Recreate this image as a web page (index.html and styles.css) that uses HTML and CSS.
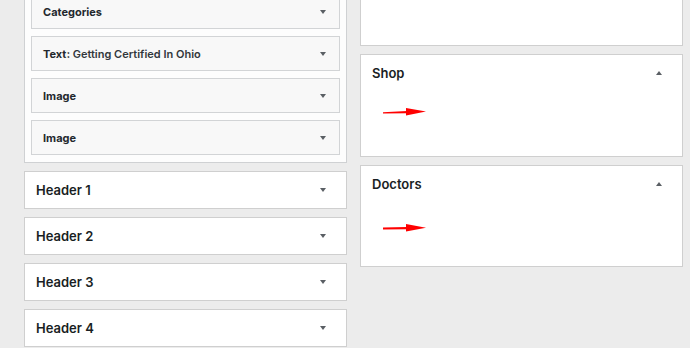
FILE: index.html
```html
<!DOCTYPE html>
<html>
<head>
<meta charset="utf-8">
<link rel="stylesheet" href="styles.css">
</head>
<body>
<div class="page">
  <div class="col">
    <div class="widgets">
      <div class="widget"><span class="w-title">Categories</span><span class="tri down"></span></div>
      <div class="widget"><span class="w-title">Text: <span class="w-sub">Getting Certified In Ohio</span></span><span class="tri down"></span></div>
      <div class="widget"><span class="w-title">Image</span><span class="tri down"></span></div>
      <div class="widget"><span class="w-title">Image</span><span class="tri down"></span></div>
    </div>
    <div class="section"><span class="s-title">Header 1</span><span class="tri down"></span></div>
    <div class="section"><span class="s-title">Header 2</span><span class="tri down"></span></div>
    <div class="section"><span class="s-title">Header 3</span><span class="tri down"></span></div>
    <div class="section"><span class="s-title">Header 4</span><span class="tri down"></span></div>
  </div>
  <div class="col">
    <div class="panel panel-top"></div>
    <div class="panel panel-shop">
      <div class="p-head"><span class="s-title">Shop</span><span class="tri up"></span></div>
      <div class="p-body body-shop">
        <svg class="red-arrow" width="44" height="10" viewBox="0 0 44 10"><polygon points="0,5.2 24,4 24,6.2 0,6.6" fill="#f00"/><polygon points="23,1 43,4.6 23,8.6" fill="#f00"/></svg>
      </div>
    </div>
    <div class="panel panel-doc">
      <div class="p-head"><span class="s-title">Doctors</span><span class="tri up"></span></div>
      <div class="p-body body-doc">
        <svg class="red-arrow" width="44" height="10" viewBox="0 0 44 10"><polygon points="0,4.6 24,4 24,6.2 0,6.4" fill="#f00"/><polygon points="23,1 43,4.8 23,8.6" fill="#f00"/></svg>
      </div>
    </div>
  </div>
</div>
</body>
</html>
```
FILE: styles.css
```css
html, body {
  margin: 0;
  padding: 0;
  background: #ececec;
  font-family: Inter, "Liberation Sans", sans-serif;
  color: #1d2327;
  overflow: hidden;
}
.page {
  display: flex;
  gap: 13px;
  padding-left: 24px;
  height: 348px;
}
.col {
  width: 323px;
  display: flex;
  flex-direction: column;
  flex: none;
}
.widgets {
  margin-top: -13px;
  background: #fdfdfd;
  border: 1px solid #cfd1d3;
  padding: 6px 6px 7px 6px;
  display: flex;
  flex-direction: column;
  gap: 7px;
}
.widget {
  height: 33px;
  background: #f8f8f8;
  border: 1px solid #d2d4d6;
  display: flex;
  align-items: center;
  justify-content: space-between;
  padding: 0 13px 0 11px;
}
.w-title {
  font-size: 11px;
  font-weight: 700;
  color: #23282d;
}
.w-sub {
  font-weight: 600;
  color: #32373c;
}
.section {
  margin-top: 8px;
  height: 36px;
  background: #fff;
  border: 1px solid #cfcfcf;
  display: flex;
  align-items: center;
  justify-content: space-between;
  padding: 0 20px 0 11px;
}
.s-title {
  font-size: 13px;
  font-weight: 600;
  color: #191e23;
}
.tri {
  width: 0;
  height: 0;
  border-left: 3.5px solid transparent;
  border-right: 3.5px solid transparent;
}
.tri.down {
  border-top: 4px solid #5a5f64;
}
.tri.up {
  border-bottom: 4px solid #5a5f64;
}
.panel {
  background: #fff;
  border: 1px solid #cfcfcf;
}
.panel-top {
  margin-top: -20px;
  height: 64px;
}
.panel-shop {
  margin-top: 8px;
  height: 101px;
}
.panel-doc {
  margin-top: 8px;
  height: 100px;
}
.p-head {
  height: 36px;
  display: flex;
  align-items: center;
  justify-content: space-between;
  padding: 0 20px 0 11px;
}
.p-body {
  padding-left: 22px;
}
.body-shop { padding-top: 16px; }
.body-doc { padding-top: 21px; }
.red-arrow { display: block; }
```
